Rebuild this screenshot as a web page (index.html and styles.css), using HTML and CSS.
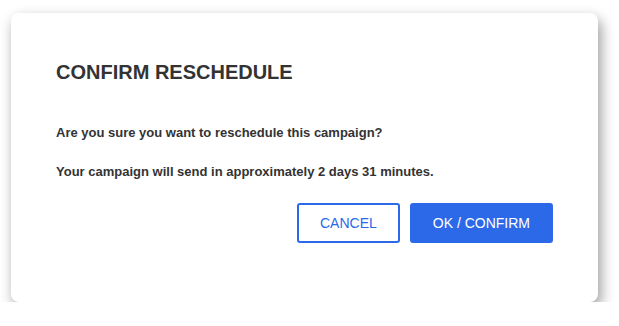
FILE: index.html
```html
<!DOCTYPE html>
<html lang="en">
<head>
  <meta charset="UTF-8">
  <meta name="viewport" content="width=device-width, initial-scale=1.0">
  <title>Confirm Reschedule</title>
  <link rel="stylesheet" href="styles.css">
</head>
<body>

<div class="modal">
  <h2 class="modal-title">CONFIRM RESCHEDULE</h2>
  <p class="modal-text first">Are you sure you want to reschedule this campaign?</p>
  <p class="modal-text">Your campaign will send in approximately 2 days 31 minutes.</p>
  <div class="modal-actions">
    <button type="button" class="btn btn-cancel">CANCEL</button>
    <button type="button" class="btn btn-confirm">OK / CONFIRM</button>
  </div>
</div>

</body>
</html>
```

FILE: styles.css
```css
body {
  margin: 0;
  padding: 13px 0 0 11px;
  background: #fff;
  font-family: "Liberation Sans", Arial, sans-serif;
  color: #333;
}
.modal {
  box-sizing: border-box;
  width: 587px;
  height: 289px;
  padding: 48px 45px 0 45px;
  background: #fff;
  border-radius: 8px;
  box-shadow: 3px 6px 14px rgba(0,0,0,0.4);
}
.modal-title {
  margin: 0;
  font-size: 20px;
  line-height: 23px;
  font-weight: bold;
}
.modal-text {
  margin: 24px 0 0;
  font-size: 13px;
  line-height: 15px;
  font-weight: bold;
}
.modal-text.first {
  margin-top: 41px;
}
.modal-actions {
  display: flex;
  justify-content: flex-end;
  gap: 10px;
  margin-top: 24px;
}
.btn {
  height: 40px;
  padding: 0 21px;
  font-family: inherit;
  font-size: 14px;
  border-radius: 3px;
  border: 2px solid #2c69e9;
  cursor: pointer;
}
.btn-cancel {
  background: #fff;
  color: #2c69e9;
}
.btn-confirm {
  background: #2c69e9;
  color: #fff;
}
```
